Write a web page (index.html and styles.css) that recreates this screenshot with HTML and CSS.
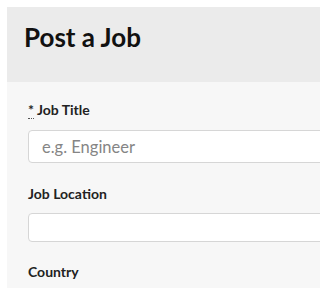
FILE: index.html
```html
<!DOCTYPE html>
<html>
<head>
<meta charset="utf-8">
<link rel="stylesheet" href="styles.css">
</head>
<body>
<div class="card">
  <div class="card-header">
    <h1 class="title">Post a Job</h1>
  </div>
  <div class="card-body">
    <div class="field">
      <label class="label"><abbr class="req" title="required">*</abbr> Job Title</label>
      <input class="input input-lg" type="text" placeholder="e.g. Engineer">
    </div>
    <div class="field field-mid">
      <label class="label">Job Location</label>
      <input class="input" type="text">
    </div>
    <div class="field field-last">
      <label class="label">Country</label>
    </div>
  </div>
</div>
</body>
</html>
```
FILE: styles.css
```css
html, body {
  margin: 0;
  padding: 0;
  background: #ffffff;
  overflow: hidden;
  font-family: Lato, "Noto Sans", sans-serif;
  color: #222222;
}
.card {
  margin: 7px 0 0 7px;
  overflow: hidden;
  background: #f7f7f7;
}
.card-header {
  height: 75px;
  background: #ebebeb;
  padding-left: 17px;
}
.title {
  margin: 0;
  padding-top: 14px;
  font-size: 26px;
  line-height: 32px;
  font-weight: 700;
  color: #111111;
}
.card-body {
  padding: 18px 0 6px 21px;
  display: flex;
  flex-direction: column;
  gap: 21px;
}
.field {
  display: flex;
  flex-direction: column;
  gap: 10px;
}
.field-mid {
  gap: 9px;
}
.field-last {
  margin-top: -1px;
}
.label {
  font-size: 14px;
  line-height: 20px;
  font-weight: 700;
  color: #222222;
}
.req {
  text-decoration: none;
  border-bottom: 1px dotted #555555;
}
.input {
  box-sizing: border-box;
  width: calc(100% + 40px);
  height: 29px;
  border: 1px solid #d6d6d6;
  border-radius: 4px;
  background: #ffffff;
  padding: 0 13px;
  font-family: Lato, "Noto Sans", sans-serif;
  font-size: 16.5px;
  color: #222222;
  outline: none;
}
.input-lg {
  height: 33px;
}
.input::placeholder {
  color: #858585;
}
```
